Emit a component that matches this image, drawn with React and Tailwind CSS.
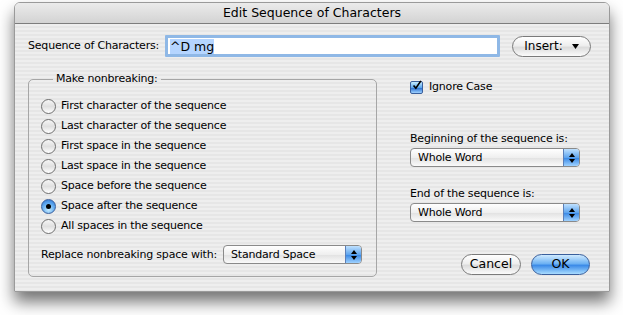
import React, { useState } from "react";

const font = "font-['DejaVu_Sans',sans-serif]";
const body = "text-[11px] tracking-[-0.2px] leading-[14px] whitespace-nowrap";

function Radio({ label, checked, onClick }) {
  return (
    <div className="flex items-center h-5 cursor-default" onClick={onClick}>
      {checked ? (
        <span className="w-[15px] h-[15px] rounded-full border border-[#3a5f9c] bg-[radial-gradient(circle_at_50%_75%,#c6ecff_0%,#5fa9ef_55%,#2a6fd0_100%)] flex items-center justify-center">
          <span className="w-[5px] h-[5px] rounded-full bg-black" />
        </span>
      ) : (
        <span className="w-[15px] h-[15px] rounded-full border border-[#6e6e6e] bg-[linear-gradient(#f6f6f6,#e0e0e0_50%,#ffffff)]" />
      )}
      <span className={"ml-[5px] text-black " + body}>{label}</span>
    </div>
  );
}

function PopUp({ value, className }) {
  return (
    <div
      className={
        "h-[19px] flex items-stretch rounded-[4px] border border-[#8a8a8a] bg-[linear-gradient(#ffffff,#efefef_50%,#e3e3e3_55%,#fafafa)] overflow-hidden " +
        className
      }
    >
      <span className="flex-1 pl-[7px] leading-[17px] text-black text-[11px] tracking-[-0.2px]">{value}</span>
      <span className="w-[16px] border-l border-[#5b7fb8] bg-[linear-gradient(#bfe1ff,#5fa5ee_50%,#3d8be6_55%,#9fd2ff)] flex flex-col items-center justify-center gap-[2px]">
        <svg width="6" height="4" viewBox="0 0 6 4">
          <path d="M0 4 L3 0 L6 4 Z" fill="#000" />
        </svg>
        <svg width="6" height="4" viewBox="0 0 6 4">
          <path d="M0 0 L3 4 L6 0 Z" fill="#000" />
        </svg>
      </span>
    </div>
  );
}

export default function App() {
  const [choice, setChoice] = useState(5);
  const [ignoreCase, setIgnoreCase] = useState(true);
  const options = [
    "First character of the sequence",
    "Last character of the sequence",
    "First space in the sequence",
    "Last space in the sequence",
    "Space before the sequence",
    "Space after the sequence",
    "All spaces in the sequence",
  ];

  return (
    <div className={"w-[623px] h-[315px] bg-white overflow-hidden pt-[2px] pl-[14px] " + font}>
      <div className="w-[596px] h-[290px] rounded-t-[6px] border border-[#9a9a9a] shadow-[0_10px_16px_rgba(0,0,0,0.55)] flex flex-col overflow-hidden">
        {/* title bar */}
        <div className="h-[21px] shrink-0 border-b border-[#7d7d7d] bg-[linear-gradient(#ebebeb,#d3d3d3)] flex items-center justify-center">
          <span className="text-[12.5px] text-black">Edit Sequence of Characters</span>
        </div>

        {/* body */}
        <div className="flex-1 bg-[repeating-linear-gradient(#eeeeee_0px,#eeeeee_2px,#e6e6e6_2px,#e6e6e6_4px)] px-[13px] pt-[10px]">
          <div className="flex items-center h-[24px]">
            <span className={body + " w-[137px]"}>Sequence of Characters:</span>
            <div className="w-[335px] h-[22px] border-[3px] border-[#8fb8e6] rounded-[1px] bg-white flex items-center pl-[2px]">
              <span className="text-[12.5px] bg-[#b5d5ff] leading-[15px]">^D mg</span>
            </div>
            <button className="ml-[12px] w-[79px] h-[21px] rounded-full border border-[#7a7a7a] bg-[linear-gradient(#ffffff,#eeeeee_45%,#dcdcdc_55%,#fbfbfb)] flex items-center justify-center gap-[9px] text-[12px]">
              Insert:
              <svg width="7" height="5" viewBox="0 0 7 5">
                <path d="M0 0 L7 0 L3.5 5 Z" fill="#000" />
              </svg>
            </button>
          </div>

          <div className="flex mt-[14px]">
            {/* group box */}
            <fieldset className="w-[349px] h-[205px] border border-[#a6a6a6] rounded-[5px] px-[12px] pt-[10px]">
              <legend className={"ml-[12px] px-[3px] " + body}>Make nonbreaking:</legend>
              <div className="flex flex-col">
                {options.map((o, i) => (
                  <Radio key={i} label={o} checked={choice === i} onClick={() => setChoice(i)} />
                ))}
              </div>
              <div className="flex items-center mt-[9px]">
                <span className={body + " w-[182px]"}>Replace nonbreaking space with:</span>
                <PopUp value="Standard Space" className="w-[139px]" />
              </div>
            </fieldset>

            {/* right side */}
            <div className="ml-[33px] flex flex-col w-[180px] pt-[7px]">
              <div className="flex items-center h-[16px]" onClick={() => setIgnoreCase(!ignoreCase)}>
                <span className="w-[13px] h-[13px] rounded-[2px] border border-[#3a5f9c] bg-[linear-gradient(#c6ecff,#5fa9ef_50%,#2a6fd0_55%,#9fd2ff)] flex items-center justify-center">
                  {ignoreCase && (
                    <svg width="13" height="13" viewBox="0 0 13 13" className="-mt-[3px] ml-[1px]">
                      <path d="M2 6.5 L5 10 L11.5 0.5" stroke="#000" strokeWidth="2.2" fill="none" />
                    </svg>
                  )}
                </span>
                <span className={"ml-[6px] " + body}>Ignore Case</span>
              </div>

              <span className={body + " mt-[37px]"}>Beginning of the sequence is:</span>
              <PopUp value="Whole Word" className="w-[170px] mt-[2px]" />

              <span className={body + " mt-[20px]"}>End of the sequence is:</span>
              <PopUp value="Whole Word" className="w-[170px] mt-[2px]" />

              <div className="flex mt-[32px] gap-[10px] ml-[51px]">
                <button className="w-[60px] h-[21px] rounded-full border border-[#7a7a7a] bg-[linear-gradient(#ffffff,#eeeeee_45%,#dcdcdc_55%,#fbfbfb)] text-[12.5px]">
                  Cancel
                </button>
                <button className="w-[59px] h-[21px] rounded-full border border-[#3a5f9c] bg-[linear-gradient(#cfeaff,#6eb2f3_45%,#3c8be8_55%,#a8dcff)] text-[12.5px]">
                  OK
                </button>
              </div>
            </div>
          </div>
        </div>
      </div>
    </div>
  );
}
